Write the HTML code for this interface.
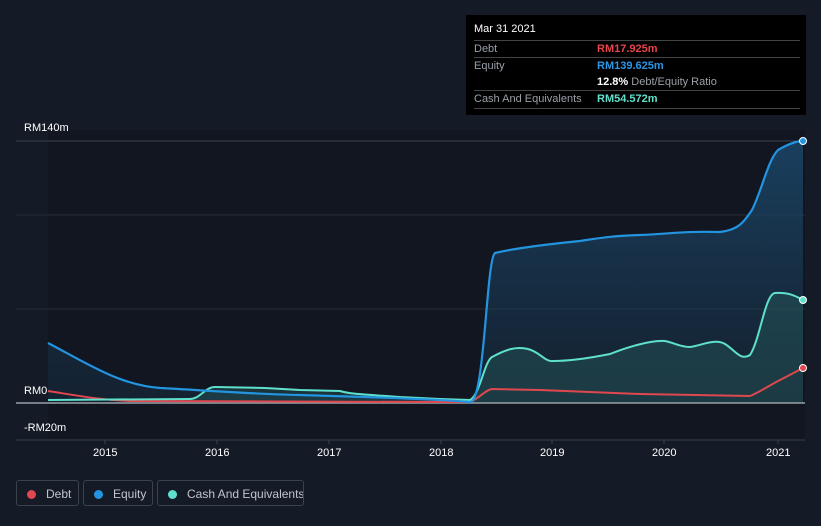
<!DOCTYPE html><html><head><style>
html,body{margin:0;width:821px;height:526px;overflow:hidden}
body{background:#151b26;font-family:"Liberation Sans",sans-serif;position:relative}
.t{position:absolute;color:#fff;font-size:12px}
.ax{position:absolute;color:#fff;font-size:11px;top:447px}
.tip{position:absolute;left:466px;top:15px;width:340px;height:100px;background:#000;font-size:11px}
.r{position:absolute;left:8px;right:6px;border-top:1px solid #444;height:17px;line-height:17px;color:#9aa0a8}
.leg{position:absolute;top:480px;height:26px;border:1px solid #3c424d;border-radius:3px;color:#c0c4cc;font-size:12px;line-height:26px;box-sizing:border-box;white-space:nowrap;overflow:hidden}
.leg i{display:inline-block;width:9px;height:9px;border-radius:50%;margin:0 10px 0 10px;vertical-align:-1px}
</style></head><body>
<svg width="821" height="526" style="position:absolute;left:0;top:0">
<defs><linearGradient id="g" x1="0" y1="0" x2="0" y2="1"><stop offset="0" stop-color="#1b4a6e" stop-opacity=".8"/><stop offset="1" stop-color="#1b3a55" stop-opacity=".3"/></linearGradient></defs>
<rect x="48" y="130" width="757" height="310" fill="#111620"/>
<line x1="16" y1="141" x2="805" y2="141" stroke="#3a404a"/>
<line x1="16" y1="215" x2="805" y2="215" stroke="#262c36"/>
<line x1="16" y1="309" x2="805" y2="309" stroke="#262c36"/>
<line x1="16" y1="440" x2="805" y2="440" stroke="#3a404a"/>
<g stroke="#3a404a"><line x1="105" y1="440" x2="105" y2="444"/><line x1="217" y1="440" x2="217" y2="444"/><line x1="329" y1="440" x2="329" y2="444"/><line x1="441" y1="440" x2="441" y2="444"/><line x1="552" y1="440" x2="552" y2="444"/><line x1="664" y1="440" x2="664" y2="444"/><line x1="778" y1="440" x2="778" y2="444"/></g>
<path d="M48,343 C90,365 120,385 160,388 C200,390 250,394 300,395 C360,397 420,398 470,402 C485,402 486,260 495,253 C520,247 560,243 580,241 C600,238 610,236 640,235 C670,234 680,231 720,232 C740,230 745,220 752,210 C762,190 768,160 778,150 C790,143 797,141 803,141 L803,403 L48,403Z" fill="url(#g)"/>
<path d="M48,400 L190,399 C200,399 205,387 215,387 L265,388 L300,390 L340,391 C350,394 360,394 400,397 L440,399 L470,400 C480,395 484,362 492,357 C505,350 515,346 528,349 C540,352 545,362 553,361 C570,361 590,358 610,354 C625,348 650,340 665,341 C675,343 680,347 690,347 C700,346 715,338 725,344 C735,350 740,361 750,355 C760,340 765,294 775,293 C790,292 797,297 803,300 L803,403 L470,403Z" fill="#2a6a66" fill-opacity=".35"/>
<line x1="16" y1="403" x2="805" y2="403" stroke="#9aa0a8" stroke-width="1.5"/>
<path d="M48,391 C80,396 100,400 130,401 L440,402 L470,402 C480,398 485,390 492,389 L540,390 L640,394 L750,396 C760,392 770,385 780,380 C790,375 797,371 803,368" fill="none" stroke="#e0474f" stroke-width="2"/>
<path d="M48,400 L190,399 C200,399 205,387 215,387 L265,388 L300,390 L340,391 C350,394 360,394 400,397 L440,399 L470,400 C480,395 484,362 492,357 C505,350 515,346 528,349 C540,352 545,362 553,361 C570,361 590,358 610,354 C625,348 650,340 665,341 C675,343 680,347 690,347 C700,346 715,338 725,344 C735,350 740,361 750,355 C760,340 765,294 775,293 C790,292 797,297 803,300" fill="none" stroke="#5fe0cc" stroke-width="2"/>
<path d="M48,343 C90,365 120,385 160,388 C200,390 250,394 300,395 C360,397 420,398 470,402 C485,402 486,260 495,253 C520,247 560,243 580,241 C600,238 610,236 640,235 C670,234 680,231 720,232 C740,230 745,220 752,210 C762,190 768,160 778,150 C790,143 797,141 803,141" fill="none" stroke="#2394e0" stroke-width="2.2"/>
<circle cx="803" cy="141" r="3.5" fill="#2394e0" stroke="#fff" stroke-width="1"/>
<circle cx="803" cy="300" r="3.5" fill="#5fe0cc" stroke="#fff" stroke-width="1"/>
<circle cx="803" cy="368" r="3.5" fill="#e0474f" stroke="#fff" stroke-width="1"/>
</svg>
<div class="t" style="left:24px;top:122px;font-size:11px">RM140m</div>
<div class="t" style="left:24px;top:385px;font-size:11px">RM0</div>
<div class="t" style="left:24px;top:422px;font-size:11px">-RM20m</div>
<div class="ax" style="left:93px">2015</div><div class="ax" style="left:205px">2016</div><div class="ax" style="left:317px">2017</div><div class="ax" style="left:429px">2018</div><div class="ax" style="left:540px">2019</div><div class="ax" style="left:652px">2020</div><div class="ax" style="left:766px">2021</div>
<div class="tip">
<div style="position:absolute;left:8px;top:8px;color:#fff">Mar 31 2021</div>
<div class="r" style="top:25px">Debt<span style="position:absolute;left:123px;color:#e8434b;font-weight:bold">RM17.925m</span></div>
<div class="r" style="top:42px">Equity<span style="position:absolute;left:123px;color:#2a96e6;font-weight:bold">RM139.625m</span></div>
<div style="position:absolute;left:131px;top:59px;line-height:17px;color:#9aa0a8"><b style="color:#fff">12.8%</b> Debt/Equity Ratio</div>
<div class="r" style="top:75px">Cash And Equivalents<span style="position:absolute;left:123px;color:#5fe0cc;font-weight:bold">RM54.572m</span></div>
<div class="r" style="top:93px;height:0"></div>
</div>
<div class="leg" style="left:16px;width:63px"><i style="background:#e0474f"></i>Debt</div>
<div class="leg" style="left:83px;width:70px"><i style="background:#2394e0"></i>Equity</div>
<div class="leg" style="left:157px;width:147px"><i style="background:#5fe0cc"></i>Cash And Equivalents</div>
</body></html>
